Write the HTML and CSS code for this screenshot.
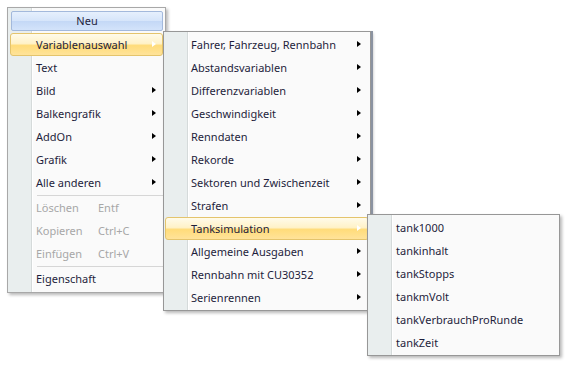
FILE: index.html
```html
<!DOCTYPE html>
<html lang="de">
<head>
    <meta charset="UTF-8">
    <title>Kontextmenü</title>
    <link rel="stylesheet" href="styles.css">
</head>
<body>
    <div class="desk">
        <!-- Hauptmenü -->
        <div class="menu menu-main">
            <div class="btn-new">Neu</div>
            <div class="item active sub">Variablenauswahl</div>
            <div class="item">Text</div>
            <div class="item sub">Bild</div>
            <div class="item sub">Balkengrafik</div>
            <div class="item sub">AddOn</div>
            <div class="item sub">Grafik</div>
            <div class="item sub">Alle anderen</div>
            <div class="sep"></div>
            <div class="item off"><span class="label">Löschen</span><span class="key">Entf</span></div>
            <div class="item off"><span class="label">Kopieren</span><span class="key">Ctrl+C</span></div>
            <div class="item off"><span class="label">Einfügen</span><span class="key">Ctrl+V</span></div>
            <div class="sep"></div>
            <div class="item">Eigenschaft</div>
        </div>

        <!-- Variablenauswahl -->
        <div class="menu menu-vars">
            <div class="item sub">Fahrer, Fahrzeug, Rennbahn</div>
            <div class="item sub">Abstandsvariablen</div>
            <div class="item sub">Differenzvariablen</div>
            <div class="item sub">Geschwindigkeit</div>
            <div class="item sub">Renndaten</div>
            <div class="item sub">Rekorde</div>
            <div class="item sub">Sektoren und Zwischenzeit</div>
            <div class="item sub">Strafen</div>
            <div class="item active sub">Tanksimulation</div>
            <div class="item sub">Allgemeine Ausgaben</div>
            <div class="item sub">Rennbahn mit CU30352</div>
            <div class="item sub">Serienrennen</div>
        </div>

        <!-- Tanksimulation -->
        <div class="menu menu-tank">
            <div class="item">tank1000</div>
            <div class="item">tankinhalt</div>
            <div class="item">tankStopps</div>
            <div class="item">tankmVolt</div>
            <div class="item">tankVerbrauchProRunde</div>
            <div class="item">tankZeit</div>
        </div>
    </div>
</body>
</html>
```

FILE: styles.css
```css
body {
    margin: 0;
    background-color: #ffffff;
    font-family: "Noto Sans", "Open Sans", sans-serif;
    font-size: 11px;
    color: #1e1e3c;
}

.desk {
    position: relative;
    width: 569px;
    height: 367px;
    overflow: hidden;
}

/* popup menus overlap each other like real windows */
.menu {
    position: absolute;
    box-sizing: border-box;
    display: flex;
    flex-direction: column;
    border: 1px solid #979797;
    background: linear-gradient(to right, #e9eeee 0 23px, #d5dada 23px 24px, #ffffff 24px 25px, #fafafa 25px);
    box-shadow: 2px 2px 3px rgba(0, 0, 0, 0.28);
}

.menu-main {
    left: 7px;
    top: 7px;
    width: 159px;
    height: 286px;
    padding: 3px 2px 0 3px;
    border-color: #a8a8a8;
}

.menu-vars {
    left: 163px;
    top: 31px;
    width: 208px;
    height: 280px;
    padding: 1px 1px;
    box-shadow: 2px 0 0 #8b93a1, 2px 2px 3px rgba(0, 0, 0, 0.28);
}

.menu-tank {
    left: 367px;
    top: 214px;
    width: 193px;
    height: 142px;
    padding: 1px 1px;
}

.btn-new {
    height: 20px;
    box-sizing: border-box;
    margin-bottom: 2px;
    border: 1px solid #a3b9dc;
    border-radius: 2px;
    background: linear-gradient(#e6f0fd, #d6e5fa 48%, #c4d8f6 52%, #d3e3fa);
    text-align: center;
    line-height: 18px;
}

.item {
    position: relative;
    box-sizing: border-box;
    height: 23px;
    line-height: 21px;
    padding-left: 25px;
    border: 1px solid transparent;
    border-radius: 3px;
    display: flex;
    white-space: nowrap;
}

.menu-main .item {
    margin-left: -1px;
    padding-left: 25px;
}

.menu-tank .item {
    padding-left: 26px;
}

.item.sub::after {
    content: "";
    position: absolute;
    right: 7px;
    top: 7px;
    border-left: 4px solid #000000;
    border-top: 3.5px solid transparent;
    border-bottom: 3.5px solid transparent;
}

.menu-main .item.sub::after {
    right: 6px;
}

.item.active {
    border-color: #e4c46c;
    background: linear-gradient(#fffbea, #fff2c8 45%, #ffdc7a 55%, #ffe39a);
}

.item.active::after {
    border-left-color: #ffffff;
}

.item.off {
    color: #a7a7a7;
}

.label {
    width: 62px;
}

.sep {
    height: 1px;
    margin: 1px 0 0 26px;
    background-color: #d6d6d6;
}
```
